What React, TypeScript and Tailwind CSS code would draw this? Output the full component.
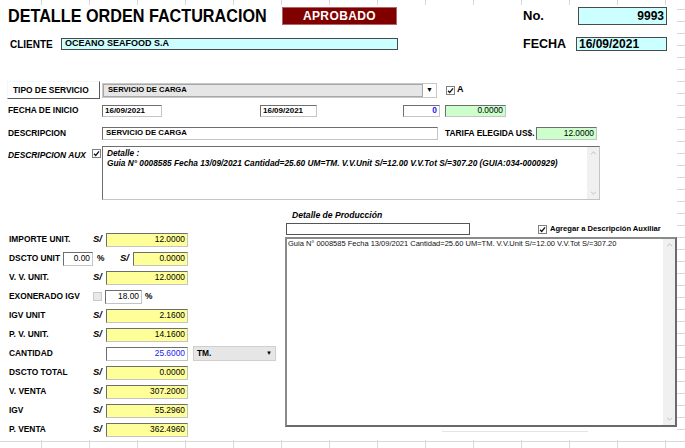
import React from 'react'

const INSET = 'border border-t-[#6e6e6e] border-l-[#6e6e6e] border-r-[#c4c4c4] border-b-[#c4c4c4]'

function Check({ checked = true, disabled = false }: { checked?: boolean; disabled?: boolean }) {
  return (
    <span
      className={`flex h-[9px] w-[9px] shrink-0 items-center justify-center border ${
        disabled ? 'border-[#c9c9c9] bg-[#e9e9e9]' : 'border-[#808080] bg-white'
      }`}
    >
      {checked && (
        <svg viewBox="0 0 8 8" className="h-[7px] w-[7px]">
          <path d="M1.2 4.2 L3.1 6.2 L6.9 1.6" fill="none" stroke="#111" strokeWidth="1.5" />
        </svg>
      )}
    </span>
  )
}

function Chevron({ up }: { up?: boolean }) {
  return (
    <svg viewBox="0 0 8 5" className="h-[4px] w-[7px]">
      <path d={up ? 'M1 4 L4 1 L7 4' : 'M1 1 L4 4 L7 1'} fill="none" stroke="#b5b5b5" strokeWidth="1" />
    </svg>
  )
}

function ScrollTrack({ h }: { h: string }) {
  return (
    <div className={`flex w-[12px] flex-col items-center justify-between bg-[#f0f0f0] py-[4px] ${h}`}>
      <Chevron up />
      <Chevron />
    </div>
  )
}

function Yellow({ value, w = 'w-[82px]' }: { value: string; w?: string }) {
  return (
    <div className={`flex h-[14px] ${w} items-center justify-end bg-[#ffff99] pr-[2px] text-[8.4px] ${INSET}`}>
      {value}
    </div>
  )
}

function Sol({ className = '' }: { className?: string }) {
  return <span className={`text-[9.5px] font-bold italic ${className}`}>S/</span>
}

function Row({ label, children }: { label: string; children: React.ReactNode }) {
  return (
    <div className="flex h-[19px] items-center">
      <div className="w-[93px] pl-[9px] text-[8.4px] font-bold">{label}</div>
      {children}
    </div>
  )
}

function MoneyRow({ label, value }: { label: string; value: string }) {
  return (
    <Row label={label}>
      <Sol className="w-[13px]" />
      <Yellow value={value} />
    </Row>
  )
}

export default function App() {
  return (
    <div className="h-[448px] w-[685px] overflow-hidden bg-white bg-[image:linear-gradient(to_right,#d9d9d9_1px,transparent_1px),linear-gradient(to_bottom,#d9d9d9_1px,transparent_1px)] bg-[size:48px_12px] bg-[position:41px_9px] font-['Liberation_Sans',Arial,sans-serif] text-black">
      <div className="mt-[5px] h-[435px] w-[677px] bg-white pt-[2px]">
        {/* titulo */}
        <div className="flex h-[18px] items-center">
          <div className="ml-[8px] w-[274px]">
            <div className="origin-left scale-x-[0.875] whitespace-nowrap text-[18.5px] font-bold leading-none">
              DETALLE ORDEN FACTURACION
            </div>
          </div>
          <div className="flex h-[18px] w-[115px] items-center justify-center border border-[#b46464] bg-[#800000] text-[12px] font-bold tracking-[0.4px] text-white">
            APROBADO
          </div>
          <div className="ml-[126px] w-[55px] text-[13px] font-bold">No.</div>
          <div className="flex h-[18px] w-[89px] items-center justify-end border border-[#4a4a4a] bg-[#ccffff] pr-[2px] text-[12px] font-bold">
            9993
          </div>
        </div>

        {/* cliente / fecha */}
        <div className="mt-[12px] flex h-[14px] items-center">
          <div className="ml-[10px] w-[51px] text-[10px] font-bold">CLIENTE</div>
          <div className="flex h-[12px] w-[337px] items-center border border-[#4a4a4a] bg-[#ccffff] pl-[3px] text-[9px] font-bold">
            OCEANO SEAFOOD S.A
          </div>
          <div className="ml-[125px] w-[53px] text-[12.5px] font-bold">FECHA</div>
          <div className="flex h-[14px] w-[91px] items-center border border-[#4a4a4a] bg-[#ccffff] pl-[2px] text-[12px] font-bold">
            16/09/2021
          </div>
        </div>

        {/* tipo de servicio */}
        <div className="mt-[30px] flex h-[18px] items-center">
          <div className="ml-[7px] flex h-[18px] w-[93px] items-center border border-t-[#f6f6f6] border-l-[#f6f6f6] border-r-[#5a5a5a] border-b-[#5a5a5a] bg-white pl-[5px] text-[8.4px] font-bold">
            TIPO DE SERVICIO
          </div>
          <div className="ml-[2px] flex h-[15px] w-[335px] items-center border border-[#c8c8c8] bg-white">
            <div className="flex h-[13px] flex-1 items-center border border-[#a8a8a8] bg-[#e6e6e6] pl-[4px] text-[7.6px] font-bold">
              SERVICIO DE CARGA
            </div>
            <div className="flex w-[13px] justify-center text-[7px]">▼</div>
          </div>
          <div className="ml-[9px]">
            <Check />
          </div>
          <span className="ml-[2px] text-[9px] font-bold">A</span>
        </div>

        {/* fecha de inicio */}
        <div className="mt-[5px] flex h-[13px] items-center">
          <div className="ml-[8px] w-[94px] text-[8.4px] font-bold">FECHA DE INICIO</div>
          <div className={`flex h-[12px] w-[60px] items-center bg-white pl-[2px] text-[8px] font-bold ${INSET}`}>16/09/2021</div>
          <div className={`ml-[98px] flex h-[12px] w-[57px] items-center bg-white pl-[2px] text-[8px] font-bold ${INSET}`}>16/09/2021</div>
          <div className={`ml-[86px] flex h-[12px] w-[37px] items-center justify-end bg-white pr-[2px] text-[8.4px] font-bold text-[#2222ee] ${INSET}`}>0</div>
          <div className={`ml-[5px] flex h-[12px] w-[61px] items-center justify-end bg-[#ccffcc] pr-[2px] text-[8.4px] ${INSET}`}>0.0000</div>
        </div>

        {/* descripcion */}
        <div className="mt-[9px] flex h-[14px] items-center">
          <div className="ml-[8px] w-[94px] text-[8.4px] font-bold">DESCRIPCION</div>
          <div className={`flex h-[13px] w-[336px] items-center bg-white pl-[3px] text-[7.8px] font-bold ${INSET}`}>SERVICIO DE CARGA</div>
          <div className="ml-[7px] w-[91px] text-[8.4px] font-bold">TARIFA ELEGIDA US$.</div>
          <div className={`flex h-[13px] w-[61px] items-center justify-end bg-[#ccffcc] pr-[2px] text-[8.4px] ${INSET}`}>12.0000</div>
        </div>

        {/* descripcion aux */}
        <div className="mt-[6px] flex items-start">
          <div className="ml-[8px] mt-[3px] w-[84px] text-[8.4px] font-bold italic">DESCRIPCION AUX</div>
          <div className="mt-[3px]">
            <Check />
          </div>
          <div className={`ml-[1px] flex h-[54px] w-[498px] bg-white ${INSET}`}>
            <div className="flex-1 pl-[4px] pt-[1px] text-[8.3px] font-bold italic leading-[10px]">
              <div>Detalle :</div>
              <div className="whitespace-nowrap">
                Guia N° 0008585 Fecha 13/09/2021 Cantidad=25.60 UM=TM. V.V.Unit S/=12.00 V.V.Tot S/=307.20 (GUIA:034-0000929)
              </div>
            </div>
            <ScrollTrack h="h-[52px]" />
          </div>
        </div>

        <div className="flex">
          {/* columna importes */}
          <div className="w-[285px] pt-[30px]">
            <MoneyRow label="IMPORTE UNIT." value="12.0000" />
            <div className="flex h-[19px] items-center">
              <div className="w-[63px] pl-[9px] text-[8.4px] font-bold">DSCTO UNIT</div>
              <div className={`flex h-[14px] w-[30px] items-center justify-end bg-white pr-[2px] text-[8.4px] ${INSET}`}>0.00</div>
              <span className="ml-[4px] w-[23px] text-[8.4px] font-bold">%</span>
              <Sol className="w-[13px]" />
              <Yellow value="0.0000" w="w-[55px]" />
            </div>
            <MoneyRow label="V. V. UNIT." value="12.0000" />
            <Row label="EXONERADO IGV">
              <Check checked={false} disabled />
              <div className={`ml-[3px] flex h-[14px] w-[37px] items-center justify-end bg-white pr-[2px] text-[8.4px] ${INSET}`}>18.00</div>
              <span className="ml-[3px] text-[8.4px] font-bold">%</span>
            </Row>
            <MoneyRow label="IGV UNIT" value="2.1600" />
            <MoneyRow label="P. V. UNIT." value="14.1600" />
            <Row label="CANTIDAD">
              <div className="w-[13px]" />
              <div className={`flex h-[14px] w-[82px] items-center justify-end bg-white pr-[2px] text-[8.4px] text-[#2222ee] ${INSET}`}>25.6000</div>
              <div className="ml-[5px] flex h-[15px] w-[83px] items-center justify-between border border-[#cfcfcf] bg-[#e6e6e6] pl-[3px] pr-[3px] text-[8.4px] font-bold">
                <span>TM.</span>
                <span className="text-[6px]">▼</span>
              </div>
            </Row>
            <MoneyRow label="DSCTO TOTAL" value="0.0000" />
            <MoneyRow label="V. VENTA" value="307.2000" />
            <MoneyRow label="IGV" value="55.2960" />
            <MoneyRow label="P. VENTA" value="362.4960" />
          </div>

          {/* detalle de produccion */}
          <div className="w-[392px] pt-[9px]">
            <div className="ml-[7px] h-[13px] text-[8.6px] font-bold italic">Detalle de Producción</div>
            <div className="flex h-[14px] items-center">
              <div className="ml-[1px] h-[12px] w-[184px] border border-[#555] bg-white" />
              <div className="ml-[68px]">
                <Check />
              </div>
              <span className="ml-[3px] text-[7.6px] font-bold">Agregar a Descripción Auxiliar</span>
            </div>
            <div className="mt-[1px] flex h-[190px] w-[392px] border-2 border-t-[#8a8a8a] border-l-[#8a8a8a] border-r-[#6a6a6a] border-b-[#6a6a6a] bg-white">
              <div className="flex-1 pl-[1px] text-[7.5px] leading-[10px] text-[#111]">
                Guia N° 0008585 Fecha 13/09/2021 Cantidad=25.60 UM=TM. V.V.Unit S/=12.00 V.V.Tot S/=307.20
              </div>
              <ScrollTrack h="h-[186px]" />
            </div>
            <div className="ml-[157px] mt-[4px] h-px w-[146px] bg-[#e4e4e4]" />
          </div>
        </div>
      </div>
    </div>
  )
}
